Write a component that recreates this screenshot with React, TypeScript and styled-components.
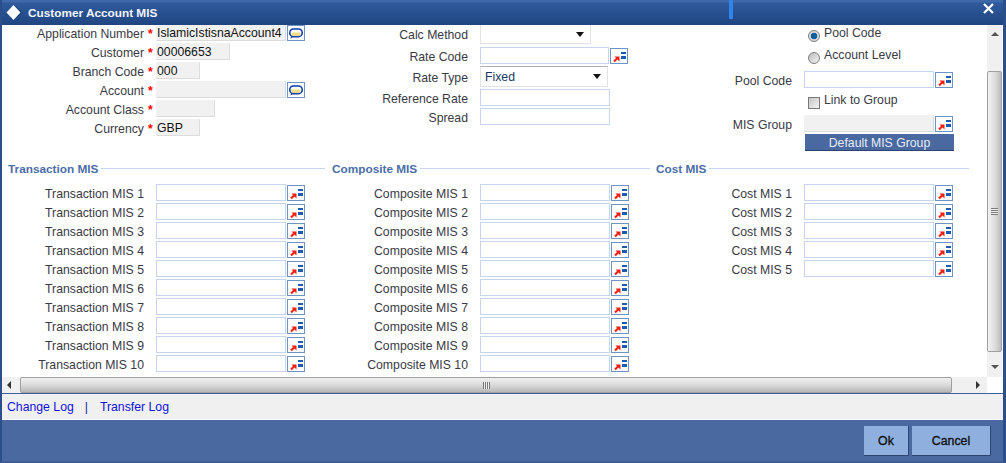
import React from "react";
import styled, { createGlobalStyle } from "styled-components";

const GlobalStyle = createGlobalStyle`
  html, body {
    margin: 0;
    padding: 0;
    background: #ffffff;
    overflow: hidden;
  }
  * {
    box-sizing: border-box;
  }
`;

const Frame = styled.div`
  width: 1006px;
  height: 463px;
  display: flex;
  flex-direction: column;
  border-left: 2px solid #2c4f8c;
  border-right: 3px solid #2c4f8c;
  border-bottom: 2px solid #3f5c94;
  font-family: "Liberation Sans", Arial, sans-serif;
  font-size: 12.25px;
  color: #3a3a44;
  overflow: hidden;
`;

const TitleBar = styled.div`
  height: 25px;
  margin-left: -2px;
  margin-right: -3px;
  flex: none;
  display: flex;
  align-items: center;
  position: relative;
  z-index: 1;
  background: linear-gradient(#3f68a8 0, #3f68a8 2px, #2f5a9c 3px, #204581 100%);
  padding-left: 6px;
`;

const TitleText = styled.div`
  flex: 1;
  margin-left: 5px;
  color: #f2f5fa;
  font-weight: bold;
  font-size: 11.8px;
`;

const Marker = styled.div`
  width: 4px;
  height: 19px;
  align-self: flex-start;
  background: #2f85e8;
`;

const CloseButton = styled.div`
  width: 13px;
  height: 13px;
  margin: 0 11px 8px 249px;
  display: flex;
`;

const Main = styled.div`
  height: 352px;
  flex: none;
  display: flex;
`;

const Content = styled.div`
  width: 985px;
  flex: none;
  background: #ffffff;
  margin-top: -1px;
`;

const TopGrid = styled.div`
  height: 137px;
  display: grid;
  grid-template-columns: repeat(3, 324px);
`;

const Column = styled.div<{ $top?: number }>`
  display: flex;
  flex-direction: column;
  padding-top: ${(p) => p.$top ?? 0}px;
`;

const Row = styled.div<{ $h?: number; $after?: number }>`
  display: flex;
  align-items: center;
  height: ${(p) => p.$h ?? 17}px;
  margin-bottom: ${(p) => p.$after ?? 2}px;
  flex: none;
`;

const Label = styled.div`
  width: 142px;
  padding-top: 2px;
  flex: none;
  text-align: right;
  white-space: nowrap;
`;

const Star = styled.span`
  width: 12px;
  padding-top: 2px;
  flex: none;
  padding-left: 4px;
  color: #ff0000;
  font-weight: bold;
`;

const Spacer = styled.span`
  width: 12px;
  flex: none;
`;

const TextInput = styled.div<{ $w?: number; $off?: boolean }>`
  width: ${(p) => p.$w ?? 130}px;
  height: 100%;
  flex: none;
  padding: 0;
  line-height: 16px;
  white-space: nowrap;
  overflow: hidden;
  color: #111111;
  background: ${(p) => (p.$off ? "#f1f1f1" : "#ffffff")};
  border: 1px solid ${(p) => (p.$off ? "#f1f1f1" : "#c6d4ec")};
  border-right-color: ${(p) => (p.$off ? "#dcdcdc" : "#c6d4ec")};
  border-bottom-color: ${(p) => (p.$off ? "#dcdcdc" : "#c6d4ec")};
`;

const SelectBox = styled.div<{ $w: number; $framed?: boolean }>`
  width: ${(p) => p.$w}px;
  height: 100%;
  flex: none;
  display: flex;
  align-items: center;
  justify-content: space-between;
  padding: 0 6px 0 4px;
  color: #17385f;
  background: #ffffff;
  border: 1px solid #e2e2e2;
  border-top-color: ${(p) => (p.$framed ? "#b0b0b0" : "#e2e2e2")};
`;

const Caret = styled.span`
  width: 0;
  height: 0;
  border-left: 4px solid transparent;
  border-right: 4px solid transparent;
  border-top: 5px solid #111111;
`;

const IconButton = styled.button`
  width: 18px;
  height: 16px;
  flex: none;
  margin-left: 1px;
  padding: 0;
  display: flex;
  border: 1px solid #6f93c4;
  background: #ffffff;
`;

const OptionRow = styled.div<{ $h: number; $pad?: number }>`
  height: ${(p) => p.$h}px;
  padding: ${(p) => p.$pad ?? 0}px 0 0 158px;
  display: flex;
  align-items: flex-start;
  flex: none;
`;

const OptionLabel = styled.span`
  line-height: 15px;
  margin-left: 4px;
`;

const Radio = styled.span<{ $on?: boolean }>`
  width: 12px;
  height: 12px;
  margin-top: 4px;
  border-radius: 50%;
  flex: none;
  border: 1px solid #7f7f7f;
  background: ${(p) =>
    p.$on
      ? "radial-gradient(circle, #0a5f9e 0, #0a5f9e 3px, #d8d8d8 3.6px)"
      : "linear-gradient(135deg, #bcbcbc, #f2f2f2)"};
`;

const Check = styled.span`
  width: 12px;
  height: 12px;
  margin-top: 4px;
  flex: none;
  border: 1px solid #777777;
  background: linear-gradient(135deg, #c4c4c4, #f4f4f4);
`;

const GroupButton = styled.div`
  width: 149px;
  height: 17px;
  margin-left: 155px;
  text-align: center;
  line-height: 18px;
  color: #e6ecf6;
  background: #4a69a1;
  border-bottom: 1px solid #2c4270;
`;

const SectionHeads = styled.div`
  height: 15px;
  margin-bottom: 8px;
  display: grid;
  grid-template-columns: repeat(3, 324px);
`;

const SectionHead = styled.div<{ $end: number }>`
  display: flex;
  align-items: center;
  gap: 3px;
  padding: 0 ${(p) => p.$end}px 0 6px;
  color: #4a6ea8;
  font-weight: bold;
  font-size: 11.8px;
`;

const SectionLine = styled.span`
  flex: 1;
  height: 1px;
  background: #c6d4ec;
`;

const MisGrid = styled.div`
  display: grid;
  grid-template-columns: repeat(3, 324px);
`;

const VScroll = styled.div`
  width: 15px;
  flex: none;
  display: flex;
  flex-direction: column;
  background: #f0f0f0;
`;

const VEnd = styled.div<{ $h: number; $pad: number }>`
  height: ${(p) => p.$h}px;
  padding-top: ${(p) => p.$pad}px;
  flex: none;
  display: flex;
  justify-content: center;
  align-items: flex-start;
`;

const VThumb = styled.div`
  flex: 1;
  display: flex;
  align-items: center;
  justify-content: center;
  border: 1px solid #a0a0a0;
  border-radius: 2px;
  background: linear-gradient(to right, #f2f2f2, #dcdcdc 55%, #bdbdbd);
`;

const UpArrow = styled.span`
  width: 0;
  height: 0;
  border-left: 4px solid transparent;
  border-right: 4px solid transparent;
  border-bottom: 4px solid #555555;
`;

const DownArrow = styled.span`
  width: 0;
  height: 0;
  border-left: 4px solid transparent;
  border-right: 4px solid transparent;
  border-top: 4px solid #555555;
`;

const LeftArrow = styled.span`
  width: 0;
  height: 0;
  border-top: 4px solid transparent;
  border-bottom: 4px solid transparent;
  border-right: 4px solid #333333;
`;

const RightArrow = styled.span`
  width: 0;
  height: 0;
  border-top: 4px solid transparent;
  border-bottom: 4px solid transparent;
  border-left: 4px solid #333333;
`;

const VGrip = styled.span`
  width: 7px;
  height: 7px;
  background: repeating-linear-gradient(#7a7a7a 0, #7a7a7a 1px, #eeeeee 1px, #eeeeee 2px);
`;

const HGrip = styled.span`
  width: 7px;
  height: 7px;
  background: repeating-linear-gradient(to right, #7a7a7a 0, #7a7a7a 1px, #eeeeee 1px, #eeeeee 2px);
`;

const HRow = styled.div`
  height: 16px;
  flex: none;
  display: flex;
`;

const HScroll = styled.div`
  width: 985px;
  display: flex;
  background: #f0f0f0;
`;

const HEnd = styled.div<{ $w: number; $pad: number }>`
  width: ${(p) => p.$w}px;
  padding-left: ${(p) => p.$pad}px;
  flex: none;
  display: flex;
  align-items: center;
`;

const HThumb = styled.div`
  flex: 1;
  display: flex;
  align-items: center;
  justify-content: center;
  border: 1px solid #a0a0a0;
  border-radius: 2px;
  background: linear-gradient(#f0f0f0, #dadada 50%, #b8b8b8);
`;

const LogBar = styled.div`
  height: 27px;
  flex: none;
  display: flex;
  align-items: center;
  padding-left: 5px;
  background: #f0f0f0;
  border-top: 1px solid #3f5f9a;
  border-bottom: 1px solid #ffffff;
`;

const LogLink = styled.a`
  color: #1111dd;
`;

const LogSep = styled.span`
  margin: 0 12px 0 11px;
  color: #2222aa;
`;

const ActionBar = styled.div`
  flex: 1;
  display: flex;
  justify-content: flex-end;
  gap: 3px;
  padding: 6px 12px 0 0;
  background: #4a69a1;
`;

const ActionButton = styled.button<{ $w: number }>`
  width: ${(p) => p.$w}px;
  height: 30px;
  padding: 0;
  border: none;
  border-bottom: 1px solid #2e4570;
  border-right: 1px solid #2e4570;
  background: #8fb0de;
  color: #111111;
  font-family: "Liberation Sans", Arial, sans-serif;
  font-size: 12.35px;
  -webkit-text-stroke: 0.35px #111111;
`;

const LovIcon = () => (
  <svg width="16" height="14" viewBox="0 0 16 14">
    <path d="M3 12.5 L6.5 9" stroke="#f02010" strokeWidth="2.2" />
    <path d="M3.5 7.5 H8.5 V12.5 Z" fill="#f02010" />
    <rect x="10" y="3" width="5" height="2" fill="#1c5cb0" />
    <rect x="10" y="7" width="5" height="3" fill="#1c5cb0" />
  </svg>
);

const ChatIcon = () => (
  <svg width="16" height="14" viewBox="0 0 16 14">
    <rect x="1.8" y="3" width="12.4" height="7.6" rx="3.6" fill="#ffffff" stroke="#0c3ea8" strokeWidth="1.6" />
    <path d="M3.5 6.5 H12.5 V9.7 H3.5 Z" fill="#f2dc80" />
    <path d="M3 10 L2.6 12.4 L6 10.4 Z" fill="#0c3ea8" />
  </svg>
);

const DiamondIcon = () => (
  <svg width="17" height="17" viewBox="0 0 17 17">
    <path d="M8 1 L16 8.5 L8 16 L1 8.5 Z" fill="#16335f" />
    <path d="M7.5 1 L14.5 8.5 L7.5 16 L0.5 8.5 Z" fill="#ffffff" />
  </svg>
);

const CloseIcon = () => (
  <svg width="13" height="13" viewBox="0 0 13 13">
    <path d="M2 2 L11 11 M11 2 L2 11" stroke="#ffffff" strokeWidth="2.2" />
  </svg>
);

const Lov = () => (
  <IconButton>
    <LovIcon />
  </IconButton>
);

const Chat = () => (
  <IconButton>
    <ChatIcon />
  </IconButton>
);

const misRows = (prefix: string, count: number) =>
  Array.from({ length: count }, (_, i) => (
    <Row key={i}>
      <Label>
        {prefix} MIS {i + 1}
      </Label>
      <Spacer />
      <TextInput />
      <Lov />
    </Row>
  ));

const App: React.FC = () => {
  return (
    <Frame>
      <GlobalStyle />
      <TitleBar>
        <DiamondIcon />
        <TitleText>Customer Account MIS</TitleText>
        <Marker />
        <CloseButton>
          <CloseIcon />
        </CloseButton>
      </TitleBar>
      <Main>
        <Content>
          <TopGrid>
            <Column>
              <Row>
                <Label>Application Number</Label>
                <Star>*</Star>
                <TextInput $off>IslamicIstisnaAccount4</TextInput>
                <Chat />
              </Row>
              <Row>
                <Label>Customer</Label>
                <Star>*</Star>
                <TextInput $off $w={74}>00006653</TextInput>
              </Row>
              <Row>
                <Label>Branch Code</Label>
                <Star>*</Star>
                <TextInput $off $w={44}>000</TextInput>
              </Row>
              <Row>
                <Label>Account</Label>
                <Star>*</Star>
                <TextInput $off />
                <Chat />
              </Row>
              <Row>
                <Label>Account Class</Label>
                <Star>*</Star>
                <TextInput $off $w={59} />
              </Row>
              <Row>
                <Label>Currency</Label>
                <Star>*</Star>
                <TextInput $off $w={44}>GBP</TextInput>
              </Row>
            </Column>
            <Column>
              <Row $h={20} $after={3}>
                <Label>Calc Method</Label>
                <Spacer />
                <SelectBox $w={111}>
                  <span />
                  <Caret />
                </SelectBox>
              </Row>
              <Row>
                <Label>Rate Code</Label>
                <Spacer />
                <TextInput $w={129} />
                <Lov />
              </Row>
              <Row $h={21}>
                <Label>Rate Type</Label>
                <Spacer />
                <SelectBox $w={128} $framed>
                  <span>Fixed</span>
                  <Caret />
                </SelectBox>
              </Row>
              <Row>
                <Label>Reference Rate</Label>
                <Spacer />
                <TextInput />
              </Row>
              <Row>
                <Label>Spread</Label>
                <Spacer />
                <TextInput />
              </Row>
            </Column>
            <Column $top={2}>
              <OptionRow $h={22}>
                <Radio $on />
                <OptionLabel>Pool Code</OptionLabel>
              </OptionRow>
              <OptionRow $h={23}>
                <Radio />
                <OptionLabel>Account Level</OptionLabel>
              </OptionRow>
              <Row $after={0}>
                <Label>Pool Code</Label>
                <Spacer />
                <TextInput />
                <Lov />
              </Row>
              <OptionRow $h={27} $pad={5}>
                <Check />
                <OptionLabel>Link to Group</OptionLabel>
              </OptionRow>
              <Row>
                <Label>MIS Group</Label>
                <Spacer />
                <TextInput $off />
                <Lov />
              </Row>
              <GroupButton>Default MIS Group</GroupButton>
            </Column>
          </TopGrid>
          <SectionHeads>
            <SectionHead $end={1}>
              Transaction MIS
              <SectionLine />
            </SectionHead>
            <SectionHead $end={0}>
              Composite MIS
              <SectionLine />
            </SectionHead>
            <SectionHead $end={5}>
              Cost MIS
              <SectionLine />
            </SectionHead>
          </SectionHeads>
          <MisGrid>
            <Column>{misRows("Transaction", 10)}</Column>
            <Column>{misRows("Composite", 10)}</Column>
            <Column>{misRows("Cost", 5)}</Column>
          </MisGrid>
        </Content>
        <VScroll>
          <VEnd $h={46} $pad={7}>
            <UpArrow />
          </VEnd>
          <VThumb>
            <VGrip />
          </VThumb>
          <VEnd $h={25} $pad={13}>
            <DownArrow />
          </VEnd>
        </VScroll>
      </Main>
      <HRow>
        <HScroll>
          <HEnd $w={18} $pad={5}>
            <LeftArrow />
          </HEnd>
          <HThumb>
            <HGrip />
          </HThumb>
          <HEnd $w={35} $pad={24}>
            <RightArrow />
          </HEnd>
        </HScroll>
      </HRow>
      <LogBar>
        <LogLink>Change Log</LogLink>
        <LogSep>|</LogSep>
        <LogLink>Transfer Log</LogLink>
      </LogBar>
      <ActionBar>
        <ActionButton $w={45}>Ok</ActionButton>
        <ActionButton $w={79}>Cancel</ActionButton>
      </ActionBar>
    </Frame>
  );
};

export default App;
